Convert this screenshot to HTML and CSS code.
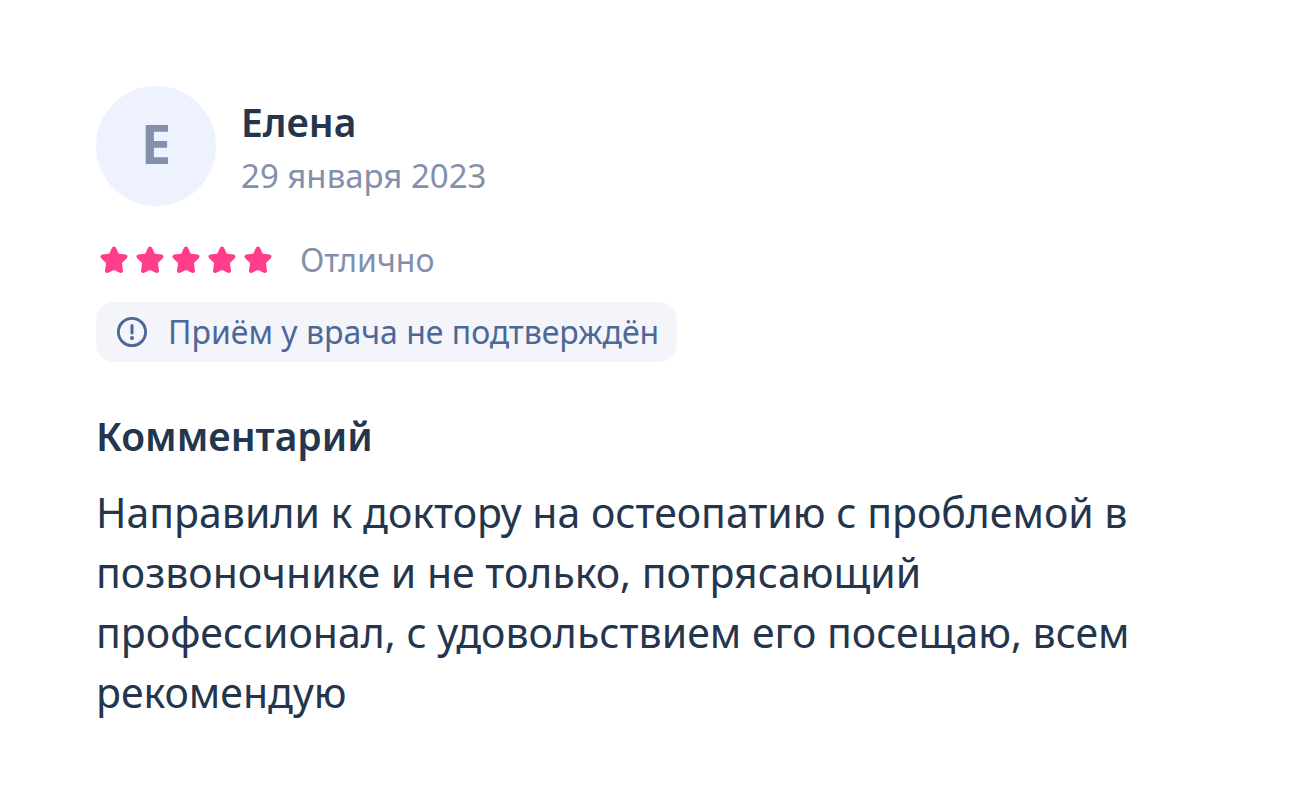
FILE: index.html
```
<!DOCTYPE html>
<html lang="ru">
<head>
<meta charset="utf-8">
<meta name="viewport" content="width=device-width, initial-scale=1">
<title>Отзыв</title>
<link rel="stylesheet" href="styles.css">
</head>
<body>
<svg class="symbols" aria-hidden="true">
  <symbol id="star" viewBox="0 0 28 28">
    <path d="M14 2.7 L17.3 9.6 L25.3 10.6 L19.6 16.3 L20.8 24.7 L14 21.4 L7.2 24.7 L8.4 16.3 L2.7 10.6 L10.7 9.6 Z" fill="currentColor" stroke="currentColor" stroke-width="4.4" stroke-linejoin="round"/>
  </symbol>
</svg>
<article class="review">
  <header class="author">
    <div class="avatar" aria-hidden="true">Е</div>
    <div class="author-info">
      <h2 class="name">Елена</h2>
      <time class="date" datetime="2023-01-29">29 января 2023</time>
    </div>
  </header>
  <div class="rating">
    <div class="stars" role="img" aria-label="5 из 5">
      <svg class="star"><use href="#star"/></svg>
      <svg class="star"><use href="#star"/></svg>
      <svg class="star"><use href="#star"/></svg>
      <svg class="star"><use href="#star"/></svg>
      <svg class="star"><use href="#star"/></svg>
    </div>
    <span>Отлично</span>
  </div>
  <div class="status">
    <svg class="status-icon" viewBox="0 0 32 32" aria-hidden="true">
      <circle cx="16" cy="16" r="13.6" fill="none" stroke="currentColor" stroke-width="2.9"/>
      <path d="M16 9.4V17" stroke="currentColor" stroke-width="3" stroke-linecap="round"/>
      <circle cx="16" cy="22" r="2" fill="currentColor"/>
    </svg>
    <span>Приём у врача не подтверждён</span>
  </div>
  <h3 class="heading">Комментарий</h3>
  <p class="comment">Направили к доктору на остеопатию с проблемой в позвоночнике и не только, потрясающий профессионал, с удовольствием его посещаю, всем рекомендую</p>
</article>
</body>
</html>
```
FILE: styles.css
```
* { box-sizing: border-box; }
body {
  margin: 0;
  background: #fff;
  color: #24364d;
  font-family: "Noto Sans", "Open Sans", sans-serif;
}
.symbols { position: absolute; width: 0; height: 0; }
.review {
  display: flex;
  flex-direction: column;
  align-items: flex-start;
  padding: 86px 96px;
}
.author { display: flex; align-items: center; gap: 25px; }
.avatar {
  display: grid;
  place-items: center;
  width: 120px;
  height: 120px;
  padding-bottom: 4px;
  border-radius: 50%;
  background: #eef2ff;
  color: #8490ab;
  font-size: 53px;
  line-height: 60px;
  font-weight: 700;
}
.author-info { display: flex; flex-direction: column; padding-top: 4px; }
.name { margin: 0; font-size: 39px; line-height: 56px; font-weight: 600; }
.date { color: #8490ab; font-size: 33px; line-height: 52px; }
.rating {
  display: flex;
  align-items: center;
  gap: 24px;
  margin-top: 30px;
  color: #8490ab;
  font-size: 32px;
  line-height: 48px;
}
.stars { display: flex; gap: 8px; padding: 0 4px; color: #ff3d8b; }
.star { width: 28px; height: 28px; }
.status {
  display: flex;
  align-items: center;
  gap: 20px;
  margin-top: 18px;
  padding: 0 18px 0 20px;
  border-radius: 18px;
  background: #f3f5fb;
  color: #4d6896;
  font-size: 32px;
  line-height: 60px;
}
.status-icon { width: 32px; height: 32px; }
.heading { margin: 46px 0 0; font-size: 39px; line-height: 56px; font-weight: 600; }
.comment { margin: 18px 0 0; max-width: 1060px; font-size: 41px; line-height: 60px; }
```
